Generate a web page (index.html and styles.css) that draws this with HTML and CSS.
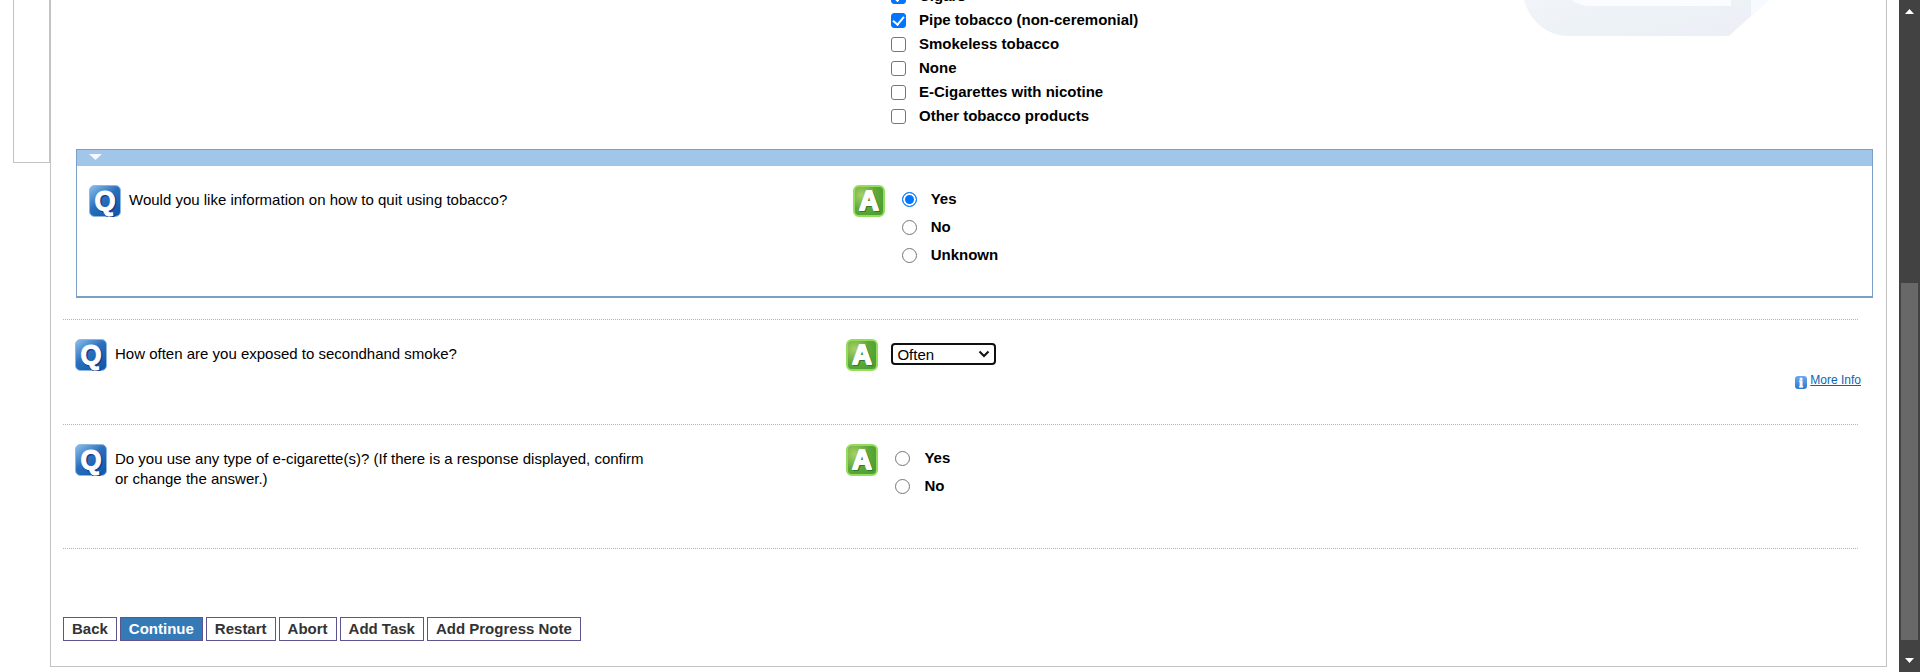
FILE: index.html
```html
<!DOCTYPE html>
<html lang="en">
<head>
<meta charset="utf-8">
<title>Tobacco Use</title>
<link rel="stylesheet" href="styles.css">
</head>
<body>
<svg class="defs" aria-hidden="true">
  <defs>
    <linearGradient id="blue" x1="0" y1="0" x2="0.8" y2="1">
      <stop offset="0" stop-color="#8fc0ee"/><stop offset="0.5" stop-color="#2a6fbc"/><stop offset="1" stop-color="#1059ab"/>
    </linearGradient>
    <radialGradient id="green" cx="0.25" cy="0.3" r="0.8">
      <stop offset="0" stop-color="#a9cf62"/><stop offset="0.6" stop-color="#5fa93a"/><stop offset="1" stop-color="#4c9f31"/>
    </radialGradient>
    <linearGradient id="info" x1="0" y1="0" x2="0" y2="1">
      <stop offset="0" stop-color="#6aa9f7"/><stop offset="1" stop-color="#2f78c8"/>
    </linearGradient>
    <linearGradient id="mark" x1="0" y1="0" x2="1" y2="0.6">
      <stop offset="0" stop-color="#f1f4f9"/><stop offset="0.5" stop-color="#edf2f6"/><stop offset="1" stop-color="#ecf0f6"/>
    </linearGradient>
    <symbol id="q" viewBox="0 0 32 32">
      <rect x="0.5" y="0.5" width="31" height="31" rx="5" fill="url(#blue)" stroke="#8db8e0"/>
      <text x="17" y="26" class="glyph glyph-q-shade">Q</text>
      <text x="16" y="25" class="glyph glyph-q">Q</text>
    </symbol>
    <symbol id="a" viewBox="0 0 32 32">
      <rect x="1" y="1" width="30" height="30" rx="5" fill="url(#green)" stroke="#93dc5c" stroke-width="2"/>
      <text x="17" y="26" class="glyph glyph-a-shade">A</text>
      <text x="16" y="25" class="glyph glyph-a">A</text>
    </symbol>
  </defs>
</svg>
<div class="window">
  <nav class="side" aria-label="Sections"></nav>
  <main class="panel">
    <svg class="watermark" viewBox="0 0 246 36" aria-hidden="true">
      <path d="M0 0C6 22 24 36 44 36H205L245 0Z" fill="url(#mark)"/>
      <path d="M47 0Q56 6 68 6H207V0Z" fill="#fafcff"/>
      <path d="M227 0V16L245 0Z" fill="#f7faff"/>
    </svg>
    <form class="form">
      <div class="products">
        <label class="check"><input type="checkbox" checked>Cigars</label>
        <label class="check"><input type="checkbox" checked>Pipe tobacco (non-ceremonial)</label>
        <label class="check"><input type="checkbox">Smokeless tobacco</label>
        <label class="check"><input type="checkbox">None</label>
        <label class="check"><input type="checkbox">E-Cigarettes with nicotine</label>
        <label class="check"><input type="checkbox">Other tobacco products</label>
      </div>
      <section class="group">
        <div class="group-head"><button type="button" class="toggle" aria-label="Collapse"></button></div>
        <div class="group-body">
          <div class="ask">
            <svg class="icon"><use href="#q"/></svg>
            <p class="text" id="q1">Would you like information on how to quit using tobacco?</p>
          </div>
          <div class="ask">
            <svg class="icon"><use href="#a"/></svg>
            <div class="radios" role="radiogroup" aria-labelledby="q1">
              <label class="radio"><input type="radio" name="quit" checked>Yes</label>
              <label class="radio"><input type="radio" name="quit">No</label>
              <label class="radio"><input type="radio" name="quit">Unknown</label>
            </div>
          </div>
        </div>
      </section>
      <hr class="rule">
      <section class="row">
        <div class="ask">
          <svg class="icon"><use href="#q"/></svg>
          <label class="text" for="smoke">How often are you exposed to secondhand smoke?</label>
        </div>
        <div class="ask">
          <svg class="icon"><use href="#a"/></svg>
          <span class="pick">
            <select id="smoke"><option>Often</option><option>Never</option></select>
            <svg class="chevron" viewBox="0 0 12 8" aria-hidden="true"><path d="M1.5 1.5L6 6L10.5 1.5"/></svg>
          </span>
        </div>
        <div class="more">
          <svg class="info" viewBox="0 0 12 13" aria-hidden="true"><rect width="12" height="13" rx="3" fill="url(#info)"/><text x="6" y="11" class="info-i">i</text></svg>
          <a href="#">More Info</a>
        </div>
      </section>
      <hr class="rule">
      <section class="row row-tall">
        <div class="ask">
          <svg class="icon"><use href="#q"/></svg>
          <p class="text" id="q3">Do you use any type of e-cigarette(s)? (If there is a response displayed, confirm or change the answer.)</p>
        </div>
        <div class="ask">
          <svg class="icon"><use href="#a"/></svg>
          <div class="radios" role="radiogroup" aria-labelledby="q3">
            <label class="radio"><input type="radio" name="ecig">Yes</label>
            <label class="radio"><input type="radio" name="ecig">No</label>
          </div>
        </div>
      </section>
      <hr class="rule">
      <div class="actions">
        <button type="button">Back</button>
        <button type="button" class="primary">Continue</button>
        <button type="button">Restart</button>
        <button type="button">Abort</button>
        <button type="button">Add Task</button>
        <button type="button">Add Progress Note</button>
      </div>
    </form>
  </main>
  <div class="scroll" aria-hidden="true">
    <svg class="arrow" viewBox="0 0 9 5"><path d="M4.5 0L9 5H0Z"/></svg>
    <div class="track"><div class="thumb"></div></div>
    <svg class="arrow" viewBox="0 0 9 5"><path d="M0 0H9L4.5 5Z"/></svg>
  </div>
</div>
</body>
</html>
```
FILE: styles.css
```css
* { box-sizing: border-box; }
body {
  margin: 0;
  background: #fff;
  color: #000;
  font: 15px/20px "Liberation Sans", Arial, sans-serif;
}
.defs { position: absolute; width: 0; height: 0; }
.window {
  display: flex;
  height: 100vh;
  overflow: hidden;
}
.side {
  width: 37px;
  height: 163px;
  margin-left: 13px;
  border: 1px solid #c3c3c3;
  border-top: 0;
  flex: none;
}
.panel {
  position: relative;
  flex: 1;
  align-self: flex-start;
  border: 1px solid #c3c3c3;
  border-top: 0;
  margin-right: 12px;
  padding: 0 12px 25px;
}
.watermark {
  position: absolute;
  top: 0;
  right: 116px;
  width: 246px;
  height: 36px;
}
.form { position: relative; }

.products {
  display: flex;
  flex-direction: column;
  margin: -16px 0 21px;
  padding-left: 828px;
}
.check, .radio {
  display: flex;
  align-items: center;
  font-weight: bold;
}
.check { height: 24px; gap: 13px; }
.radio { height: 28px; gap: 14px; }
input {
  appearance: none;
  flex: none;
  width: 15px;
  height: 15px;
  margin: 0;
  border: 1px solid #767676;
  background: #fff;
}
input[type="checkbox"] { border-radius: 3px; }
input[type="radio"] { border-radius: 50%; }
input[type="checkbox"]:checked {
  border-color: #0075ff;
  background: #0075ff;
  display: grid;
  place-items: center;
}
input[type="checkbox"]:checked::before {
  content: "";
  width: 5px;
  height: 9px;
  margin-bottom: 2px;
  border: solid #fff;
  border-width: 0 2px 2px 0;
  transform: rotate(40deg);
}
input[type="radio"]:checked {
  border-color: #0075ff;
  background: #0075ff;
  box-shadow: inset 0 0 0 2px #fff;
}

.group {
  margin: 0 1px 21px 13px;
  border: 1px solid #7ba0c8;
  border-bottom-width: 2px;
}
.group-head {
  display: flex;
  align-items: flex-start;
  height: 16px;
  padding: 4px 12px;
  background: #a2c6e9;
}
.toggle {
  width: 13px;
  height: 6px;
  padding: 0;
  border: 0;
  background: #f3f9ff;
  clip-path: polygon(0 0, 100% 0, 50% 100%);
}
.group-body {
  display: grid;
  grid-template-columns: 43% 1fr;
  padding: 19px 7px 27px 12px;
}
.ask { display: flex; align-items: flex-start; }
.icon { flex: none; width: 32px; height: 32px; }
.glyph {
  font-weight: bold;
  font-size: 27px;
  text-anchor: middle;
  stroke-linejoin: round;
}
.glyph-q { fill: #fff; stroke: #fff; stroke-width: 1px; }
.glyph-q-shade { fill: #143c8c; stroke: #143c8c; stroke-width: 2px; }
.glyph-a { fill: #fff; stroke: #fff; stroke-width: 2px; }
.glyph-a-shade { fill: #2f7a28; stroke: #2f7a28; stroke-width: 2px; }
.text { margin: 5px 0 0 8px; max-width: 540px; }
.radios { margin-left: 17px; }

.rule {
  margin: 0 16px 0 0;
  border: 0;
  border-top: 1px dotted #8fbfe8;
}
.row {
  display: grid;
  grid-template-columns: 43% 1fr;
  align-content: start;
  min-height: 104px;
  padding: 19px 5px 0 12px;
}
.row-tall { min-height: 123px; }
.pick {
  display: grid;
  align-items: center;
  margin: 4px 0 0 13px;
}
select {
  grid-area: 1 / 1;
  appearance: none;
  width: 105px;
  height: 22px;
  padding: 0 4px;
  border: 2px solid #101010;
  border-radius: 4px;
  background: #fff;
  color: #000;
  font: inherit;
}
.chevron {
  grid-area: 1 / 1;
  justify-self: end;
  width: 12px;
  height: 8px;
  margin-right: 6px;
  fill: none;
  stroke: #101010;
  stroke-width: 2px;
  pointer-events: none;
}
.more {
  grid-column: 1 / -1;
  display: flex;
  justify-content: flex-end;
  align-items: center;
  gap: 3px;
  margin-top: -1px;
  padding-right: 8px;
  font-size: 12px;
}
.more a { color: #0a66b2; }
.info { width: 12px; height: 13px; margin-top: 4px; }
.info-i {
  fill: #fff;
  stroke: #fff;
  font: bold 12px "Liberation Serif", serif;
  text-anchor: middle;
}

.actions { display: flex; gap: 3px; margin-top: 68px; }
.actions button {
  height: 24px;
  padding: 0 8px;
  border: 1px solid #5d5590;
  background: #fff;
  color: #333;
  font: bold 15px/20px "Liberation Sans", Arial, sans-serif;
}
.actions .primary { background: #337ab7; color: #fff; }

.scroll {
  display: flex;
  flex-direction: column;
  align-items: center;
  flex: none;
  width: 21px;
  padding: 9px 0;
  background: #424242;
}
.arrow { width: 9px; height: 5px; fill: #fff; }
.track {
  flex: 1;
  display: flex;
  flex-direction: column;
  justify-content: flex-end;
  width: 17px;
  padding-bottom: 18px;
}
.thumb { height: 57%; background: #686868; }
```
